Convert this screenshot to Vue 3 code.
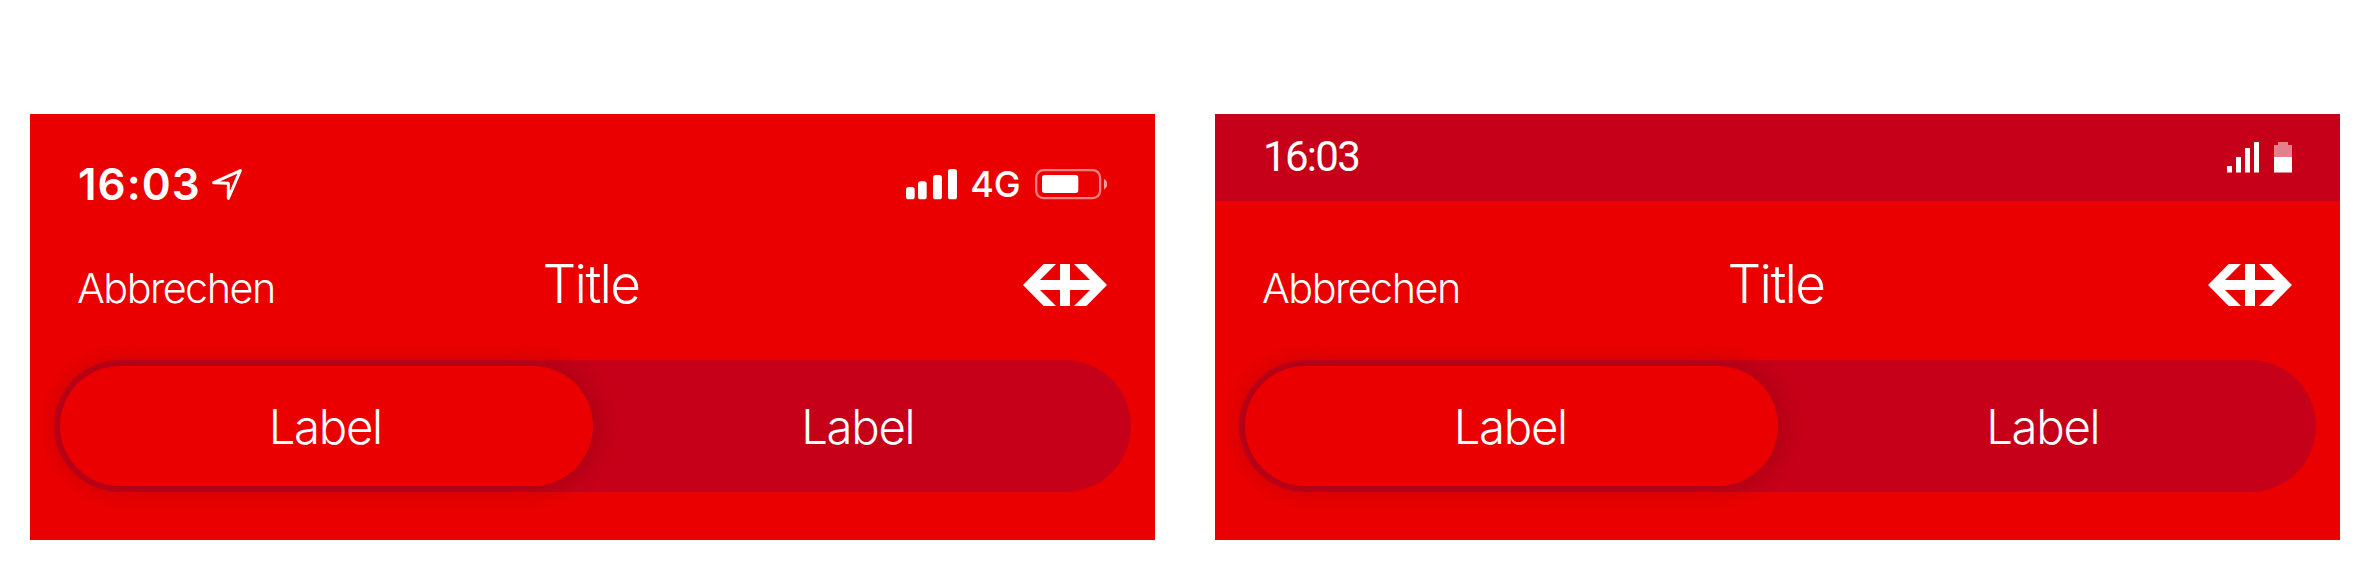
<script setup>
const panels = [
  { id: 'ios', time: '16:03' },
  { id: 'android', time: '16:03' },
]
const segments = ['Label', 'Label']
</script>

<template>
  <main class="stage">
    <section v-for="panel in panels" :key="panel.id" class="panel" :class="panel.id">
      <div v-if="panel.id === 'ios'" class="status">
        <span class="time">{{ panel.time }}</span>
        <svg class="location" viewBox="0 0 90 93">
          <path d="M5 41 L85 5 L49 88 L49 43 Z" />
        </svg>
        <svg class="signal" viewBox="0 0 153 91">
          <rect x="0" y="54" width="26" height="37" rx="8" />
          <rect x="36" y="37" width="26" height="54" rx="8" />
          <rect x="81" y="18" width="27" height="73" rx="8" />
          <rect x="126" y="0" width="27" height="91" rx="8" />
        </svg>
        <span class="network">4G</span>
        <svg class="battery" viewBox="0 0 217 91">
          <rect class="shell" x="3.500" y="3.500" width="192" height="84" rx="22" />
          <rect x="21" y="18" width="109" height="54" rx="8" />
          <path class="nub" d="M207 29 Q217 35 217 45.500 Q217 56 207 62 Z" />
        </svg>
      </div>
      <div v-else class="status">
        <span class="time">{{ panel.time }}</span>
        <svg class="signal" viewBox="0 0 32 30.500">
          <rect x="0" y="24" width="5" height="6.500" />
          <rect x="9" y="15" width="5" height="15.500" />
          <rect x="18" y="6" width="5" height="24.500" />
          <rect x="27" y="0" width="5" height="30.500" />
        </svg>
        <svg class="battery" viewBox="0 0 18 30.500">
          <path class="empty" d="M4 0 H14 V3 H18 V15 H0 V3 H4 Z" />
          <rect x="0" y="15" width="18" height="15.500" />
        </svg>
      </div>

      <header class="header">
        <span class="cancel">Abbrechen</span>
        <h1 class="title">Title</h1>
        <svg class="logo" viewBox="0 0 252 126">
          <path
            d="M0 63 L62 0 H99 L51 48 H111 V0 H141 V48 H201 L153 0 H190 L252 63 L190 126 H153 L201 78 H141 V126 H111 V78 H51 L99 126 H62 Z"
          />
        </svg>
      </header>

      <div class="segmented">
        <div v-for="(label, i) in segments" :key="i" class="segment" :class="{ active: i === 0 }">
          <span>{{ label }}</span>
        </div>
      </div>
    </section>
  </main>
</template>

<style>
body {
  margin: 0;
  background: #fff;
}
</style>

<style scoped>
.stage {
  box-sizing: border-box;
  width: 2370px;
  height: 570px;
  padding: 114px 30px 30px;
  display: flex;
  gap: 60px;
  font-family: Inter, 'Liberation Sans', sans-serif;
  color: #fff;
  overflow: hidden;
}
svg {
  display: block;
  flex: none;
  fill: #fff;
}
.panel {
  width: 1125px;
  height: 426px;
  background: #eb0000;
  display: flex;
  flex-direction: column;
  overflow: hidden;
}
.status {
  box-sizing: border-box;
  height: 87px;
  display: flex;
  align-items: center;
  padding: 0 48px;
  flex: none;
}
.ios .status {
  padding-top: 54px;
}
.ios .time {
  font-size: 44px;
  font-weight: 600;
  line-height: 33px;
  letter-spacing: 1px;
  width: 133.500px;
}
.location {
  width: 30px;
  height: 31px;
  margin-right: auto;
}
.location path {
  fill: none;
  stroke: #fff;
  stroke-width: 9;
  stroke-linejoin: round;
}
.ios .signal {
  width: 51px;
  height: 30.300px;
  margin-right: 13.500px;
}
.network {
  font-size: 36px;
  font-weight: 500;
  line-height: 33px;
  width: 64.500px;
}
.ios .battery {
  width: 72.300px;
  height: 30.300px;
}
.shell {
  fill: none;
  stroke: rgba(255, 255, 255, 0.5);
  stroke-width: 7;
}
.nub {
  fill: rgba(255, 255, 255, 0.6);
}
.android .status {
  background: #c60018;
}
.android .time {
  font-family: Roboto, sans-serif;
  font-size: 42px;
  line-height: 42px;
  letter-spacing: -1.700px;
  margin: -2px auto 0 0;
}
.android .signal {
  width: 32px;
  height: 30.500px;
  margin-right: 15px;
}
.android .battery {
  width: 18px;
  height: 30.500px;
}
.empty {
  fill: rgba(255, 255, 255, 0.5);
}
.header {
  box-sizing: border-box;
  height: 159px;
  padding: 63px 48px 0;
  display: grid;
  grid-template-columns: 1fr auto 1fr;
  align-items: baseline;
  flex: none;
}
.cancel {
  font-size: 41.300px;
  font-weight: 300;
  line-height: 40px;
  letter-spacing: -1.500px;
  margin-left: -1px;
}
.title {
  margin: 0 1px 0 -2px;
  font-size: 53px;
  font-weight: 300;
  line-height: 40px;
  letter-spacing: -1.600px;
}
.logo {
  width: 84px;
  height: 42px;
  justify-self: end;
  align-self: start;
}
.segmented {
  box-sizing: border-box;
  height: 132px;
  margin: 0 24px;
  padding: 6px;
  border-radius: 66px;
  background: #c60018;
  display: grid;
  grid-template-columns: 1fr 1fr;
  flex: none;
}
.segment {
  display: flex;
  align-items: center;
  justify-content: center;
  border-radius: 60px;
  font-size: 47.300px;
  font-weight: 300;
  letter-spacing: -1.300px;
}
.segment span {
  margin-right: 2px;
}
.segment.active {
  background: #eb0000;
  box-shadow: 0 0 30px rgba(0, 0, 0, 0.2);
}
</style>
